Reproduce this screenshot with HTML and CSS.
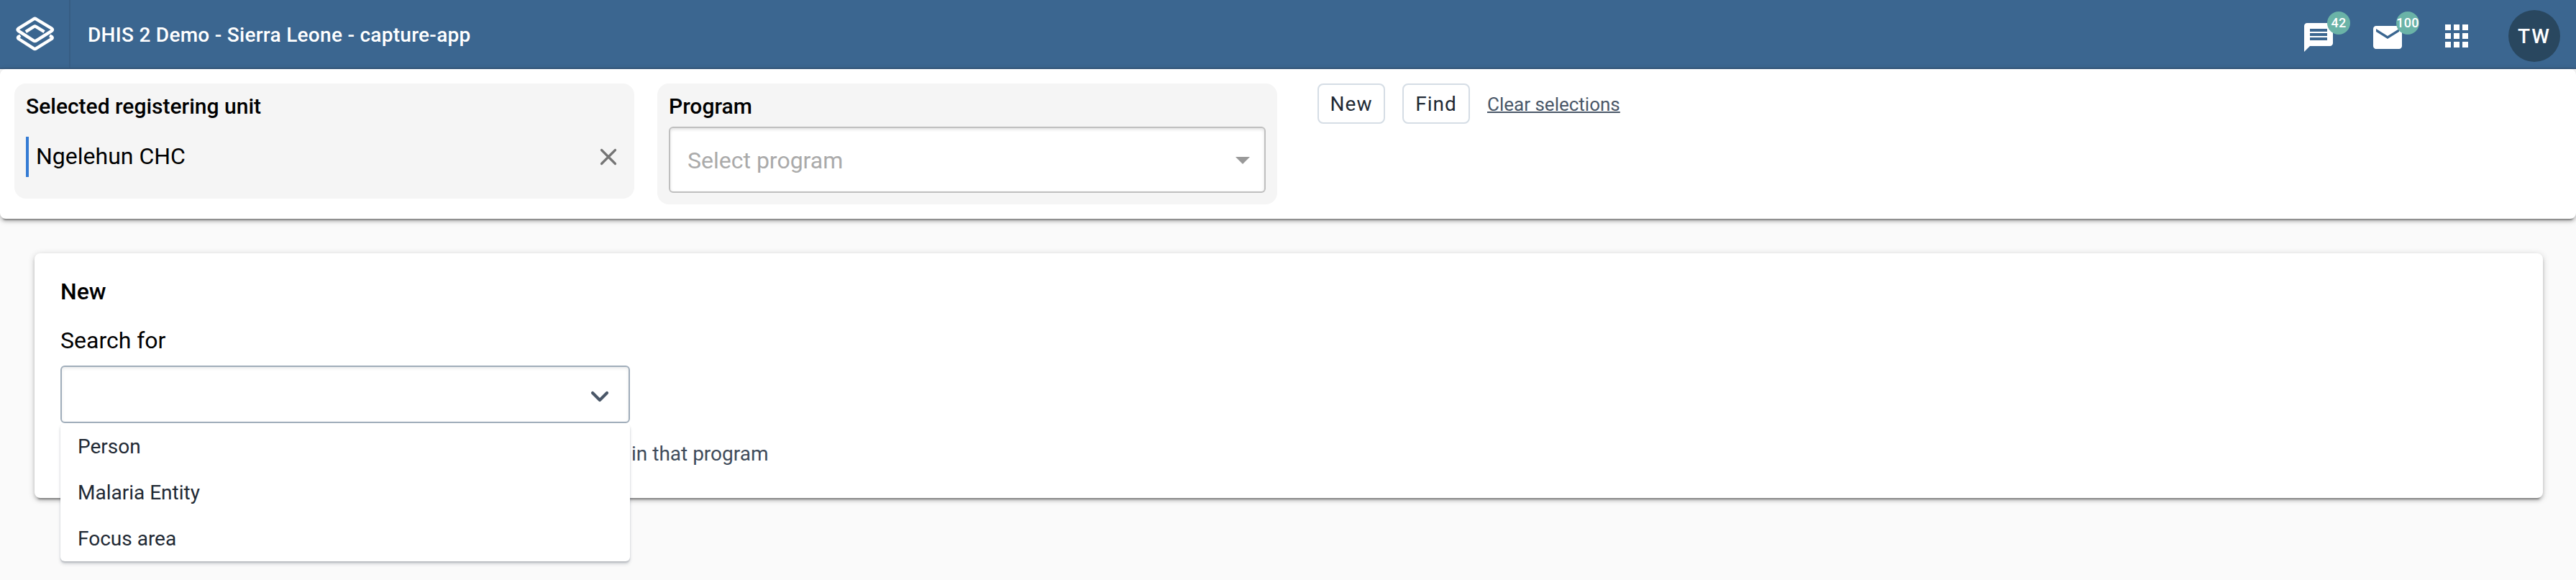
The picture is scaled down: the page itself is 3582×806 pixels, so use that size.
FILE: index.html
```html
<!DOCTYPE html>
<html lang="en">
<head>
<meta charset="utf-8">
<title>DHIS 2 Demo - Sierra Leone - capture-app</title>
<link rel="stylesheet" href="styles.css">
</head>
<body>
<header class="header">
  <a class="logo">
    <svg width="96" height="94" viewBox="0 0 96 94" fill="none" stroke="#fff" stroke-width="4.4" stroke-linejoin="round">
      <path d="M47 26.4Q48.5 25 50 26.4L72 39.6Q74 41.2 72 42.8L50.500 56.400Q48.500 57.800 46.500 56.400L25.500 42.800Q23.500 41.200 25.500 39.600Z"/>
      <path d="M35.800 44.200L46.800 37.200Q48.500 36 50.200 37.200L61.600 44.200"/>
      <path d="M28.400 49.600L25.800 50.900Q24 52.400 25.900 54L46.800 67.400Q48.500 68.600 50.200 67.400L71.800 54Q73.700 52.400 71.800 50.900L69 49.600"/>
    </svg>
  </a>
  <div class="title">DHIS 2 Demo - Sierra Leone - capture-app</div>
  <nav class="tools">
    <a class="tool">
      <svg width="48" height="48" viewBox="0 -2 48 48" fill="#fff"><path d="M40 4H8C5.790 4 4.020 5.790 4.020 8L4 44l8-8h28c2.210 0 4-1.790 4-4V8c0-2.210-1.790-4-4-4zM12 12h24v4H12zM12 18h24v4H12zM12 24h24v4H12z" fill-rule="evenodd"/></svg>
      <span class="badge">42</span>
    </a>
    <a class="tool">
      <svg width="48" height="48" viewBox="0 -2 48 48" fill="#fff"><path d="M40 8H8c-2.210 0-3.980 1.790-3.980 4L4 36c0 2.210 1.790 4 4 4h32c2.210 0 4-1.790 4-4V12c0-2.210-1.790-4-4-4zm0 8L24 26 8 16v-4l16 10 16-10v4z"/></svg>
      <span class="badge">100</span>
    </a>
    <a class="tool">
      <svg width="48" height="48" viewBox="0 0 48 48" fill="#fff"><path d="M8 16h8V8H8v8zm12 24h8v-8h-8v8zM8 40h8v-8H8v8zm0-12h8v-8H8v8zm12 0h8v-8h-8v8zM32 8v8h8V8h-8zm-12 8h8V8h-8v8zm12 12h8v-8h-8v8zm0 12h8v-8h-8v8z"/></svg>
    </a>
    <div class="avatar">TW</div>
  </nav>
</header>

<section class="selector">
  <div class="panel">
    <div class="label">Selected registering unit</div>
    <div class="unit">
      <span class="unit-name">Ngelehun CHC</span>
      <svg width="24" height="24" viewBox="0 0 24 24" stroke="#757575" stroke-width="3.200" stroke-linecap="round"><path d="M2.500 2.500L21.500 21.500M21.500 2.500L2.500 21.500"/></svg>
    </div>
  </div>
  <div class="panel">
    <div class="label">Program</div>
    <div class="program-select">
      <span class="placeholder">Select program</span>
      <svg class="arrow" width="20" height="10" viewBox="0 0 20 10" fill="#999"><path d="M0 0h20L10 10z"/></svg>
    </div>
  </div>
  <div class="actions">
    <button class="btn">New</button>
    <button class="btn">Find</button>
    <a class="clear">Clear selections</a>
  </div>
</section>

<main class="card">
  <h1 class="heading">New</h1>
  <div class="search-label">Search for</div>
  <div class="dropdown">
    <div class="field">
      <svg width="28" height="18" viewBox="0 0 28 18" fill="none" stroke="#4a5768" stroke-width="4.200" stroke-linecap="round" stroke-linejoin="round"><path d="M4 4L14 14L24 4"/></svg>
    </div>
    <ul class="menu">
      <li>Person</li>
      <li>Malaria Entity</li>
      <li>Focus area</li>
    </ul>
  </div>
  <p class="hint">in that program</p>
</main>
</body>
</html>
```
FILE: styles.css
```css
* { box-sizing: border-box; }
body {
  margin: 0;
  min-height: 806px;
  background: #fafafa;
  font-family: Roboto, "Liberation Sans", sans-serif;
  color: #000;
}
.header {
  display: flex;
  align-items: center;
  height: 96px;
  background: #3b6690;
  border-bottom: 2px solid #365a7f;
  color: #fff;
}
.logo {
  display: flex;
  width: 98px;
  height: 94px;
  border-right: 2px solid #365d84;
}
.title {
  margin-left: 24px;
  padding-top: 3px;
  font-size: 28px;
  line-height: 32px;
  font-weight: 500;
  letter-spacing: 0.28px;
}
.tools {
  display: flex;
  align-items: center;
  gap: 48px;
  margin-left: auto;
  padding: 6px 22px 0 0;
}
.tool {
  position: relative;
  display: flex;
}
.badge {
  position: absolute;
  top: -10px;
  left: 36px;
  width: 32px;
  height: 32px;
  border-radius: 50%;
  background: #6ab3a7;
  font-size: 18px;
  line-height: 32px;
  font-weight: 500;
  letter-spacing: 0.2px;
  text-align: center;
  white-space: nowrap;
}
.avatar {
  width: 72px;
  height: 72px;
  border-radius: 50%;
  background: #29475f;
  font-size: 28px;
  line-height: 73px;
  font-weight: 500;
  letter-spacing: 2px;
  text-align: center;
}
.selector {
  display: flex;
  align-items: flex-start;
  gap: 32px;
  height: 208px;
  padding: 20px;
  border-radius: 8px;
  background: #fff;
  box-shadow: 0 2px 10px rgba(0,0,0,.2), 0 4px 4px rgba(0,0,0,.14), 0 6px 2px -4px rgba(0,0,0,.3);
}
.panel {
  width: 862px;
  padding: 16px;
  border-radius: 16px;
  background: #f5f5f5;
}
.label {
  font-size: 30px;
  line-height: 32px;
  font-weight: 500;
}
.unit {
  display: flex;
  align-items: center;
  justify-content: space-between;
  height: 56px;
  margin: 26px 8px 14px 0;
  padding-left: 10px;
  border-left: 4px solid #347bd4;
  font-size: 32px;
}
.unit-name { padding-bottom: 2px; }
.program-select {
  display: flex;
  align-items: center;
  justify-content: space-between;
  width: 830px;
  height: 92px;
  margin-top: 12px;
  padding: 0 20px 0 24px;
  border: 2px solid #bfbfbf;
  border-radius: 6px;
  background: #fff;
  box-shadow: inset 0 2px 4px rgba(0,0,0,.12);
  color: #aaa;
  font-size: 32px;
}
.placeholder { padding-top: 2px; }
.arrow { margin-top: 2px; }
.actions {
  display: flex;
  align-items: center;
  gap: 24px;
  margin-left: 24px;
}
.btn {
  width: 94px;
  height: 56px;
  padding: 1px 0 0;
  border: 2px solid #d5dde5;
  border-radius: 8px;
  background: #fff;
  color: #212934;
  font: 28px/51px Roboto, sans-serif;
  letter-spacing: 1px;
}
.clear {
  padding-top: 2px;
  color: #4a5768;
  font-size: 26px;
  text-decoration: underline;
  text-decoration-thickness: 2px;
}
.card {
  width: 3488px;
  height: 340px;
  margin: 48px 0 0 48px;
  padding: 36px;
  border-radius: 8px;
  background: #fff;
  box-shadow: 0 2px 10px rgba(0,0,0,.2), 0 4px 4px rgba(0,0,0,.14), 0 6px 2px -4px rgba(0,0,0,.3);
}
.heading {
  margin: 0;
  font-size: 32px;
  line-height: 34px;
  font-weight: 500;
}
.search-label {
  margin-top: 34px;
  font-size: 32px;
  line-height: 34px;
}
.dropdown {
  position: relative;
  width: 792px;
  margin-top: 18px;
}
.field {
  display: flex;
  align-items: center;
  justify-content: flex-end;
  height: 80px;
  padding: 6px 26px 0 0;
  border: 2px solid #a0adba;
  border-radius: 6px;
  background: #fff;
  box-shadow: inset 0 2px 4px rgba(48,54,60,.1);
}
.menu {
  position: absolute;
  top: 80px;
  left: 0;
  width: 792px;
  margin: 0;
  padding: 0;
  border-radius: 6px;
  background: #fff;
  box-shadow: 0 2px 2px rgba(64,75,90,.22), 0 4px 4px rgba(64,75,90,.18);
  list-style: none;
}
.menu li {
  height: 64px;
  padding: 1px 0 0 24px;
  color: #212934;
  font-size: 28px;
  line-height: 63px;
}
.hint {
  margin: 26px 0 0;
  padding-left: 794px;
  color: #404b5a;
  font-size: 28px;
  line-height: 33px;
}
```
